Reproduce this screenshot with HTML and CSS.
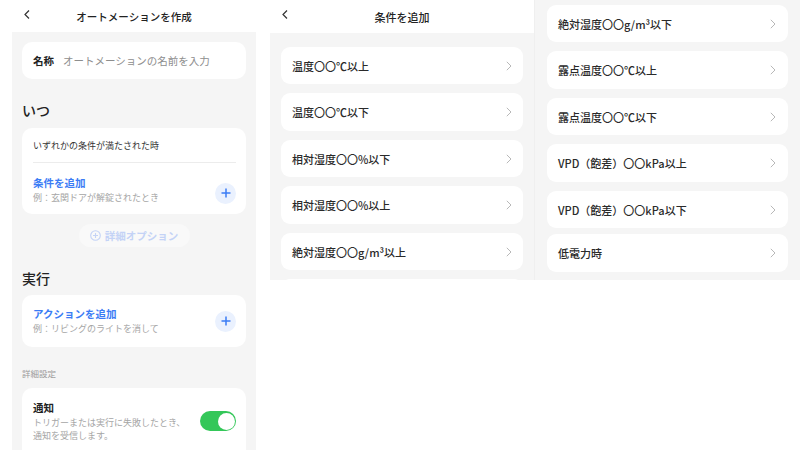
FILE: index.html
```html
<!DOCTYPE html>
<html lang="ja">
<head>
   <meta charset="utf-8">
   <title>オートメーションを作成</title>
   <link rel="stylesheet" href="styles.css">
</head>
<body>

   <!-- Screen 1: create automation -->
   <div class="screen create">
      <div class="header">
         <svg class="back" width="6" height="9" viewBox="0 0 6 9"><path d="M5 0.5 L1 4.5 L5 8.5" fill="none" stroke="#333" stroke-width="1.2"/></svg>
         <span>オートメーションを作成</span>
      </div>
      <div class="content">
         <div class="card name-card">
            <span class="name-label">名称</span>
            <span class="name-input">オートメーションの名前を入力</span>
         </div>

         <h2 class="section-title when">いつ</h2>
         <div class="card trigger-card">
            <div class="trigger-mode">いずれかの条件が満たされた時</div>
            <div class="add-row">
               <div>
                  <div class="add-title">条件を追加</div>
                  <div class="add-sub">例：玄関ドアが解錠されたとき</div>
               </div>
               <span class="plus-btn"><svg width="10" height="10" viewBox="0 0 10 10"><path d="M5 0.5 V9.5 M0.5 5 H9.5" stroke="#3b7cf5" stroke-width="1.5"/></svg></span>
            </div>
         </div>

         <div class="option-pill">
            <svg width="11" height="11" viewBox="0 0 11 11"><circle cx="5.5" cy="5.5" r="4.8" fill="none" stroke="#c4d3f6" stroke-width="1.1"/><path d="M5.5 3 V8 M3 5.5 H8" stroke="#c4d3f6" stroke-width="1.1"/></svg>
            詳細オプション
         </div>

         <h2 class="section-title run">実行</h2>
         <div class="card action-card">
            <div>
               <div class="add-title">アクションを追加</div>
               <div class="add-sub">例：リビングのライトを消して</div>
            </div>
            <span class="plus-btn"><svg width="10" height="10" viewBox="0 0 10 10"><path d="M5 0.5 V9.5 M0.5 5 H9.5" stroke="#3b7cf5" stroke-width="1.5"/></svg></span>
         </div>

         <div class="small-label">詳細設定</div>
         <div class="card notify-card">
            <div>
               <div class="notify-title">通知</div>
               <div class="notify-desc">トリガーまたは実行に失敗したとき、<br>通知を受信します。</div>
            </div>
            <span class="toggle"><span class="knob"></span></span>
         </div>
      </div>
   </div>

   <!-- Screen 2: add condition (top) -->
   <div class="screen conditions">
      <div class="header">
         <svg class="back" width="6" height="9" viewBox="0 0 6 9"><path d="M5 0.5 L1 4.5 L5 8.5" fill="none" stroke="#333" stroke-width="1.2"/></svg>
         <span>条件を追加</span>
      </div>
      <div class="list">
         <div class="item">温度〇〇℃以上<svg width="6" height="10" viewBox="0 0 6 10"><path d="M0.8 0.8 L5 5 L0.8 9.2" fill="none" stroke="#b8b8b8" stroke-width="1"/></svg></div>
         <div class="item">温度〇〇℃以下<svg width="6" height="10" viewBox="0 0 6 10"><path d="M0.8 0.8 L5 5 L0.8 9.2" fill="none" stroke="#b8b8b8" stroke-width="1"/></svg></div>
         <div class="item">相対湿度〇〇%以下<svg width="6" height="10" viewBox="0 0 6 10"><path d="M0.8 0.8 L5 5 L0.8 9.2" fill="none" stroke="#b8b8b8" stroke-width="1"/></svg></div>
         <div class="item">相対湿度〇〇%以上<svg width="6" height="10" viewBox="0 0 6 10"><path d="M0.8 0.8 L5 5 L0.8 9.2" fill="none" stroke="#b8b8b8" stroke-width="1"/></svg></div>
         <div class="item">絶対湿度〇〇g/m³以上<svg width="6" height="10" viewBox="0 0 6 10"><path d="M0.8 0.8 L5 5 L0.8 9.2" fill="none" stroke="#b8b8b8" stroke-width="1"/></svg></div>
         <div class="item"></div>
      </div>
   </div>

   <!-- Screen 3: add condition (scrolled) -->
   <div class="screen conditions-more">
      <div class="list">
         <div class="item">絶対湿度〇〇g/m³以下<svg width="6" height="10" viewBox="0 0 6 10"><path d="M0.8 0.8 L5 5 L0.8 9.2" fill="none" stroke="#b8b8b8" stroke-width="1"/></svg></div>
         <div class="item">露点温度〇〇℃以上<svg width="6" height="10" viewBox="0 0 6 10"><path d="M0.8 0.8 L5 5 L0.8 9.2" fill="none" stroke="#b8b8b8" stroke-width="1"/></svg></div>
         <div class="item">露点温度〇〇℃以下<svg width="6" height="10" viewBox="0 0 6 10"><path d="M0.8 0.8 L5 5 L0.8 9.2" fill="none" stroke="#b8b8b8" stroke-width="1"/></svg></div>
         <div class="item">VPD（飽差）〇〇kPa以上<svg width="6" height="10" viewBox="0 0 6 10"><path d="M0.8 0.8 L5 5 L0.8 9.2" fill="none" stroke="#b8b8b8" stroke-width="1"/></svg></div>
         <div class="item">VPD（飽差）〇〇kPa以下<svg width="6" height="10" viewBox="0 0 6 10"><path d="M0.8 0.8 L5 5 L0.8 9.2" fill="none" stroke="#b8b8b8" stroke-width="1"/></svg></div>
         <div class="item last">低電力時<svg width="6" height="10" viewBox="0 0 6 10"><path d="M0.8 0.8 L5 5 L0.8 9.2" fill="none" stroke="#b8b8b8" stroke-width="1"/></svg></div>
      </div>
   </div>

</body>
</html>
```

FILE: styles.css
```css
* {
   margin: 0;
   padding: 0;
   box-sizing: border-box;
   font-family: "Noto Sans CJK JP", "Noto Sans", sans-serif;
}

body {
   background: #fff;
   width: 800px;
   height: 450px;
   overflow: hidden;
   display: flex;
   align-items: flex-start;
   padding-left: 12px;
   color: #222;
}

.screen {
   display: flex;
   flex-direction: column;
}

/* Header bar with back arrow */
.header {
   position: relative;
   flex-shrink: 0;
   background: #fff;
   display: flex;
   align-items: center;
   justify-content: center;
   font-size: 10.5px;
   font-weight: 500;
   color: #222;
}

.header .back {
   position: absolute;
   left: 12px;
   top: 10px;
}

/* Screen 1 */
.create {
   width: 244px;
   height: 450px;
}

.create .header {
   height: 32px;
}

.content {
   flex: 1;
   min-height: 0;
   overflow: hidden;
   background: #f5f5f5;
   padding: 10px 10px 0;
}

.card {
   background: #fff;
   border-radius: 10px;
}

.name-card {
   height: 37px;
   display: flex;
   align-items: center;
   padding: 0 11px;
   font-size: 10.5px;
}

.name-label {
   font-weight: 700;
   color: #222;
   margin-right: 9px;
}

.name-input {
   color: #8e8e8e;
}

.section-title {
   font-size: 14px;
   font-weight: 500;
   line-height: 20px;
   color: #222;
}

.section-title.when {
   margin: 21px 0 8px;
}

.section-title.run {
   margin: 21px 0 7px;
}

.trigger-card {
   padding: 10px 10px 10px 11px;
}

.trigger-mode {
   font-size: 9px;
   line-height: 16px;
   color: #333;
   padding-bottom: 8px;
   border-bottom: 1px solid #ececec;
}

.add-row {
   display: flex;
   align-items: center;
   justify-content: space-between;
   padding-top: 13px;
}

.add-title {
   font-size: 10.5px;
   font-weight: 700;
   line-height: 14px;
   color: #3b7cf5;
}

.add-sub {
   font-size: 9px;
   line-height: 13px;
   color: #a5a5a5;
   margin-top: 1px;
}

.plus-btn {
   width: 21px;
   height: 21px;
   border-radius: 50%;
   background: #eaf1fe;
   display: flex;
   align-items: center;
   justify-content: center;
   margin-top: 6px;
}

.action-card {
   display: flex;
   align-items: center;
   justify-content: space-between;
   padding: 12px 10px 12px 11px;
}

.action-card .plus-btn {
   margin-top: 0;
}

.option-pill {
   width: 111px;
   height: 23px;
   margin: 10px auto 0;
   border-radius: 12px;
   background: #f9f9f9;
   display: flex;
   align-items: center;
   justify-content: center;
   gap: 4px;
   font-size: 10.5px;
   font-weight: 700;
   color: #c4d3f6;
}

.small-label {
   font-size: 8.5px;
   line-height: 12px;
   color: #9a9a9a;
   margin: 20px 0 9px;
}

.notify-card {
   display: flex;
   justify-content: space-between;
   align-items: flex-start;
   padding: 13px 10px 10px 11px;
   height: 80px;
}

.notify-title {
   font-size: 10.5px;
   font-weight: 700;
   line-height: 14px;
   color: #222;
}

.notify-desc {
   font-size: 9px;
   line-height: 13px;
   color: #a5a5a5;
   margin-top: 1px;
}

/* Green switch */
.toggle {
   width: 36px;
   height: 20px;
   border-radius: 10px;
   background: #34c759;
   display: flex;
   align-items: center;
   justify-content: flex-end;
   padding: 0 1.5px;
   margin-top: 10px;
   flex-shrink: 0;
}

.knob {
   width: 17px;
   height: 17px;
   border-radius: 50%;
   background: #fff;
}

/* Screen 2 and 3: condition lists */
.conditions {
   width: 264px;
   margin-left: 14px;
   height: 280px;
}

.conditions .header {
   height: 33px;
   font-size: 11px;
}

.list {
   flex: 1;
   min-height: 0;
   background: #f5f5f5;
   overflow: hidden;
   display: flex;
   flex-direction: column;
   gap: 9.3px;
}

.conditions .list {
   padding: 14px 11px 0;
}

.conditions-more {
   width: 266px;
   height: 280px;
}

.conditions-more .list {
   padding: 5px 12px 0 12px;
   border-left: 1px solid #efefef;
}

.item {
   flex-shrink: 0;
   height: 37.2px;
   background: #fff;
   border-radius: 9px;
   display: flex;
   align-items: center;
   justify-content: space-between;
   padding: 0 11px 0 11px;
   font-size: 11px;
   font-weight: 500;
   color: #2a2a2a;
}

.conditions-more .item {
   padding-right: 12px;
}

.item.last {
   margin-top: -3px;
}
```
